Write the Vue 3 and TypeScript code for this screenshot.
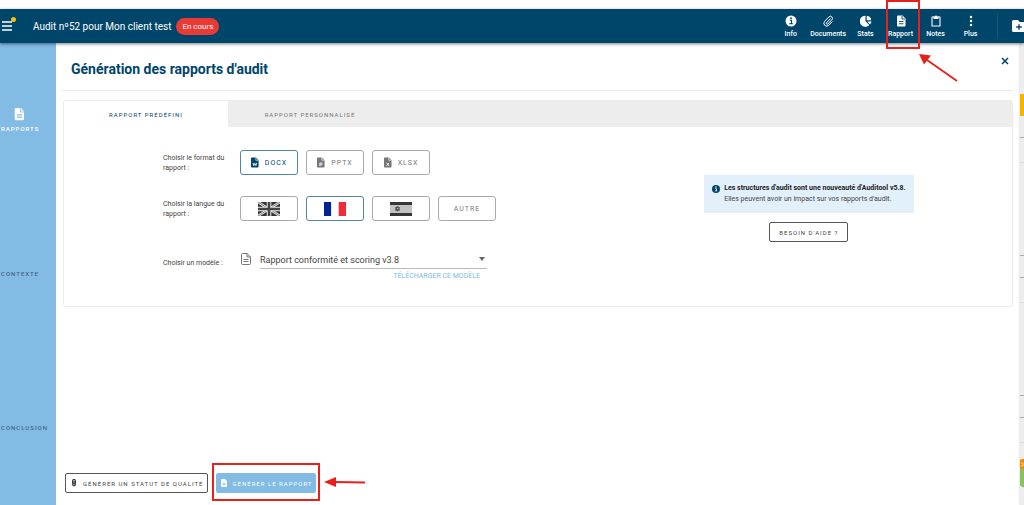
<script setup lang="ts">
import { ref } from 'vue'

type Format = 'DOCX' | 'PPTX' | 'XLSX'
type Lang = 'en' | 'fr' | 'es' | 'other'

const activeTab = ref(0)
const format = ref<Format>('DOCX')
const lang = ref<Lang>('fr')
const template = ref('Rapport conformité et scoring v3.8')

const tabs: string[] = ['Rapport prédéfini', 'Rapport personnalisé']

const formats: { id: Format; glyph: string }[] = [
  { id: 'DOCX', glyph: 'M7 13l1.600 6 2.400-5 2.400 5 1.600-6' },
  { id: 'PPTX', glyph: 'M9 20v-7h3a2 2 0 0 1 0 4.500H9' },
  { id: 'XLSX', glyph: 'M8.500 13l5 6.500M13.500 13l-5 6.500' },
]
</script>

<template>
  <div class="app">
    <header class="topbar">
      <button class="menu" type="button" aria-label="Menu">
        <svg width="11" height="10" viewBox="0 0 11 10"><path d="M0 1h10M0 5h10M0 9h10" stroke="#fff" stroke-width="1.3" /></svg>
        <span class="dot"></span>
      </button>
      <span class="audit-name">Audit nº52 pour Mon client test</span>
      <span class="status">En cours</span>

      <nav class="tools">
        <button type="button" class="tool">
          <svg viewBox="0 0 24 24"><circle cx="12" cy="12" r="11" fill="#fff" /><path d="M9.500 10.500h3.500v6.500M9 17.200h6.500" fill="none" stroke="#00456a" stroke-width="2.200" /><circle cx="12" cy="6.500" r="1.800" fill="#00456a" /></svg>
          <span>Info</span>
        </button>
        <button type="button" class="tool">
          <svg viewBox="0 0 24 24"><path d="M17 7l-8 8.500a1.800 1.800 0 0 0 2.700 2.500l8-8.500a4 4 0 0 0-6-5.700l-8.500 9a5.700 5.700 0 0 0 8.300 7.800l7-7.500" fill="none" stroke="#fff" stroke-width="2" /></svg>
          <span>Documents</span>
        </button>
        <button type="button" class="tool">
          <svg viewBox="0 0 24 24"><path d="M11 1.500v11l7.500 7.500A11 11 0 1 1 11 1.500zM13.500 1.500a10 10 0 0 1 9 9h-9zM14.500 13h8.500a11 11 0 0 1-3 6z" fill="#fff" /></svg>
          <span>Stats</span>
        </button>
        <button type="button" class="tool marked">
          <svg viewBox="0 0 24 24"><path d="M6 1h9l6 6v14a2 2 0 0 1-2 2H6a2 2 0 0 1-2-2V3a2 2 0 0 1 2-2z" fill="#fff" /><path d="M14 2v6h6M8 13h9M8 17.500h9" fill="none" stroke="#00456a" stroke-width="1.800" /></svg>
          <span>Rapport</span>
          <svg class="arrow-up" viewBox="0 0 39 28"><path d="M8 6l30 21" stroke="#e8201c" stroke-width="1.800" /><path d="M0 0l12 1.500-7 9z" fill="#e8201c" /></svg>
        </button>
        <button type="button" class="tool">
          <svg viewBox="0 0 24 24"><path d="M4 4h16v18H4z" fill="none" stroke="#fff" stroke-width="2.200" stroke-linejoin="round" /><path d="M7 3h3a2 2 0 0 1 4 0h3v5H7z" fill="#fff" /></svg>
          <span>Notes</span>
        </button>
        <button type="button" class="tool">
          <svg viewBox="0 0 24 24"><circle cx="12" cy="4" r="2.500" fill="#fff" /><circle cx="12" cy="12" r="2.500" fill="#fff" /><circle cx="12" cy="20" r="2.500" fill="#fff" /></svg>
          <span>Plus</span>
        </button>
      </nav>
      <button type="button" class="folder" aria-label="Nouveau dossier">
        <svg width="15" height="14" viewBox="0 0 15 14"><path d="M1.500 1H6l1.500 2H14v10H1.500A1.500 1.500 0 0 1 0 11.500v-9A1.500 1.500 0 0 1 1.500 1z" fill="#fff" /><path d="M7 5.200v5.600M4.200 8h5.600" stroke="#00456a" stroke-width="1.400" /></svg>
      </button>
    </header>

    <div class="body">
      <aside class="sidebar">
        <a href="#rapports" class="side-item current">
          <svg width="11" height="13" viewBox="0 0 11 13"><path d="M2 0h5l3 3.500V11a1.300 1.300 0 0 1-1.300 1.300H2A1.300 1.300 0 0 1 .7 11V1.300A1.300 1.300 0 0 1 2 0z" fill="#fff" /><path d="M6.500.5V4H10M3 6.500h5M3 8h5M3 9.500h5" fill="none" stroke="#82bbe4" stroke-width=".8" /></svg>
          <span>Rapports</span>
        </a>
        <a href="#contexte" class="side-item">Contexte</a>
        <a href="#conclusion" class="side-item">Conclusion</a>
      </aside>

      <main class="panel">
        <div class="heading">
          <h1>Génération des rapports d'audit</h1>
          <button type="button" class="close" aria-label="Fermer">
            <svg width="8" height="8" viewBox="0 0 8 8"><path d="M1 1l6 6M7 1L1 7" stroke="#00456a" stroke-width="1.500" /></svg>
          </button>
        </div>

        <section class="card">
          <div class="tabs" role="tablist">
            <button
              v-for="(tab, i) in tabs"
              :key="tab"
              type="button"
              role="tab"
              class="tab"
              :class="{ active: activeTab === i }"
              :aria-selected="activeTab === i"
              @click="activeTab = i"
            >{{ tab }}</button>
          </div>

          <div class="content">
            <div class="form">
              <div class="row">
                <span id="format-label" class="label">Choisir le format du rapport :</span>
                <div class="options" role="group" aria-labelledby="format-label">
                  <button
                    v-for="f in formats"
                    :key="f.id"
                    type="button"
                    class="option"
                    :class="{ selected: format === f.id }"
                    :aria-pressed="format === f.id"
                    @click="format = f.id"
                  >
                    <svg class="file" viewBox="0 0 18 24"><path d="M2 1h9l6 6v14a2 2 0 0 1-2 2H2a2 2 0 0 1-2-2V3a2 2 0 0 1 2-2z" fill="currentColor" /><path d="M11 1v6h6" fill="none" stroke="#fff" stroke-width="1.500" /><path :d="f.glyph" transform="translate(-2.500 0)" fill="none" stroke="#fff" stroke-width="2" /></svg>
                    <span>{{ f.id }}</span>
                  </button>
                </div>
              </div>

              <div class="row">
                <span id="lang-label" class="label">Choisir la langue du rapport :</span>
                <div class="options" role="group" aria-labelledby="lang-label">
                  <button type="button" class="option" :class="{ selected: lang === 'en' }" aria-label="Anglais" @click="lang = 'en'">
                    <svg width="22" height="14" viewBox="0 0 22 14"><path d="M0 0h22v14H0z" fill="#333" /><path d="M0 0l22 14M22 0L0 14" stroke="#e8e8e8" stroke-width="2.400" /><path d="M0 0l22 14M22 0L0 14" stroke="#666" stroke-width=".8" /><path d="M11 0v14M0 7h22" stroke="#eee" stroke-width="4.600" /><path d="M11 0v14M0 7h22" stroke="#444" stroke-width="2.600" /></svg>
                  </button>
                  <button type="button" class="option" :class="{ selected: lang === 'fr' }" aria-label="Français" @click="lang = 'fr'">
                    <svg width="22" height="14" viewBox="0 0 22 14"><path d="M0 0h7.300v14H0z" fill="#002395" /><path d="M7.300 0h7.400v14H7.300z" fill="#fff" /><path d="M14.700 0H22v14h-7.300z" fill="#ef2b3a" /></svg>
                  </button>
                  <button type="button" class="option" :class="{ selected: lang === 'es' }" aria-label="Espagnol" @click="lang = 'es'">
                    <svg width="22" height="14" viewBox="0 0 22 14"><path d="M0 0h22v14H0z" fill="#363636" /><path d="M0 3h22v8H0z" fill="#c2c2c2" /><path d="M5 5h1v4H5zM9 5h1v4H9z" fill="#777" /><path d="M6 5l1.500-1L9 5v3.500L7.500 9.500 6 8.500z" fill="#555" /><path d="M7 6h1.500v1H7z" fill="#aaa" /></svg>
                  </button>
                  <button type="button" class="option" :class="{ selected: lang === 'other' }" @click="lang = 'other'">Autre</button>
                </div>
              </div>

              <div class="row model">
                <label for="model" class="label">Choisir un modèle :</label>
                <svg class="doc" width="10" height="12" viewBox="0 0 10 12"><path d="M1.500.5h4.700L9.500 4v6.500a1 1 0 0 1-1 1h-7a1 1 0 0 1-1-1v-9a1 1 0 0 1 1-1zM6 .5V4h3.500M2.500 6.500h5M2.500 8.500h5" fill="none" stroke="#777" stroke-width="1" /></svg>
                <div class="field">
                  <div class="select-wrap">
                    <select id="model" v-model="template">
                      <option>Rapport conformité et scoring v3.8</option>
                    </select>
                    <svg class="caret" width="6" height="4" viewBox="0 0 6 4"><path d="M0 0h6L3 4z" fill="#666" /></svg>
                  </div>
                  <a href="#telecharger" class="download">Télécharger ce modèle</a>
                </div>
              </div>
            </div>

            <div class="help">
              <div class="notice">
                <svg width="8" height="8" viewBox="0 0 24 24"><circle cx="12" cy="12" r="12" fill="#00456a" /><path d="M9.500 10.500H13V17M9 17.500h6.500" fill="none" stroke="#fff" stroke-width="2.400" /><circle cx="12" cy="6" r="2" fill="#fff" /></svg>
                <p><strong>Les structures d'audit sont une nouveauté d'Auditool v5.8.</strong><br />Elles peuvent avoir un impact sur vos rapports d'audit.</p>
              </div>
              <button type="button" class="help-button">Besoin d'aide ?</button>
            </div>
          </div>
        </section>

        <footer class="actions">
          <button type="button" class="action">
            <svg width="6" height="8" viewBox="0 0 6 8"><path d="M1.500 1.500a1.500 1.200 0 0 1 3 0v3a1.700 1.700 0 1 1-3 0z" fill="#999" stroke="#222" stroke-width=".9" /><path d="M3 2.500v3" stroke="#222" /></svg>
            <span>Générer un statut de qualité</span>
          </button>
          <div class="highlight">
            <button type="button" class="action primary">
              <svg width="6" height="8" viewBox="0 0 6 8"><path d="M.7 0H4l2 2.300v5a.7.7 0 0 1-.7.7H.7A.7.7 0 0 1 0 7.300V.7A.7.7 0 0 1 .7 0z" fill="#fff" /><path d="M1.500 4.300h3M1.500 5.800h3" stroke="#82bbe4" stroke-width=".8" /></svg>
              <span>Générer le rapport</span>
            </button>
            <svg class="arrow-left" width="42" height="12" viewBox="0 0 42 12"><path d="M10 6l31 .5" stroke="#e8201c" stroke-width="1.800" /><path d="M0 6L12 1v10z" fill="#e8201c" /></svg>
          </div>
        </footer>
      </main>

      <div class="behind" aria-hidden="true">
        <i class="gap-a"></i><i class="yellow"></i><i class="cell"></i><i class="cell soft"></i><i class="gap-b"></i><i class="cell"></i><i class="cell soft"></i><i class="gap-b"></i><i class="cell"></i><i class="cell soft"></i>
        <svg width="4" height="48" viewBox="0 0 4 48"><circle cx="8" cy="31" r="14" fill="#8bc163" /><circle cx="3" cy="21" r="5" fill="#f28b00" /><path d="M1 20h2v3H1" fill="none" stroke="#ffd49a" /></svg>
      </div>
    </div>
  </div>
</template>

<style>
body {
  margin: 0;
  background: #fff;
}
</style>

<style scoped>
.app {
  display: flex;
  flex-direction: column;
  min-height: 100vh;
  overflow: hidden;
  box-sizing: border-box;
  padding-top: 9px;
  font-family: Roboto, "Liberation Sans", sans-serif;
  color: #444;
}
button,
select {
  font-family: inherit;
  border: 0;
  padding: 0;
  margin: 0;
  background: none;
  color: inherit;
  cursor: pointer;
}
svg {
  display: block;
  flex: none;
}
a {
  text-decoration: none;
}

.topbar {
  display: flex;
  align-items: center;
  height: 34px;
  background: #00456a;
  color: #fff;
  box-shadow: 0 1px 3px rgba(0, 0, 0, 0.5);
  z-index: 1;
}
.menu {
  position: relative;
  width: 33px;
  padding-left: 2px;
}
.dot {
  position: absolute;
  top: -4px;
  left: 11px;
  width: 5px;
  height: 5px;
  border-radius: 50%;
  background: #fbbf0c;
}
.audit-name {
  font-size: 10px;
  font-weight: 400;
}
.status {
  margin-left: 5px;
  padding: 0 6px;
  border-radius: 9px;
  background: #e93a36;
  font-size: 8px;
  line-height: 17px;
}
.tools {
  display: flex;
  margin-left: auto;
  height: 100%;
}
.tool {
  position: relative;
  display: flex;
  flex-direction: column;
  align-items: center;
  justify-content: center;
  gap: 3px;
  min-width: 35px;
  padding: 0 2px;
  font-size: 7px;
  line-height: 8px;
  font-weight: 500;
}
.tool svg {
  width: 12px;
  height: 12px;
}
.marked::after {
  content: "";
  position: absolute;
  inset: -9px -2px -6px 3px;
  border: 2px solid #e8201c;
}
.tool .arrow-up {
  position: absolute;
  top: 45px;
  left: 36px;
  width: 39px;
  height: 28px;
}
.folder {
  width: 27px;
  margin-left: 9px;
  height: 26px;
  padding-left: 14px;
  border-left: 1px solid #16557a;
  overflow: hidden;
}

.body {
  display: flex;
  flex: 1;
}
.sidebar {
  display: grid;
  grid-template-rows: repeat(3, 1fr);
  align-items: center;
  box-sizing: border-box;
  width: 56px;
  padding: 1px 0 0 1px;
  flex: none;
  background: #82bbe4;
}
.side-item {
  display: flex;
  flex-direction: column;
  gap: 4px;
  color: #426a86;
  font-size: 6px;
  line-height: 8px;
  font-weight: 500;
  letter-spacing: 1px;
  text-transform: uppercase;
}
.side-item svg {
  margin-left: 13px;
}
.current {
  color: #fff;
}

.panel {
  display: flex;
  flex-direction: column;
  flex: 1;
  min-width: 0;
  padding: 0 7px 12px;
}
.heading {
  display: flex;
  justify-content: space-between;
  height: 47px;
  margin-left: -1px;
  padding: 0 4px 0 9px;
  border-bottom: 1px solid #e9e9e9;
}
h1 {
  margin: 0;
  color: #00456a;
  font-size: 14px;
  line-height: 52px;
  font-weight: 700;
}
.close {
  align-self: flex-start;
  margin-top: 14px;
}
.card {
  margin-top: 9px;
  border: 1px solid #ececec;
  border-radius: 3px;
}
.tabs {
  display: flex;
  background: #ededed;
}
.tab {
  min-width: 164px;
  height: 26px;
  color: #777;
  font-size: 6px;
  letter-spacing: 1px;
  text-transform: uppercase;
}
.tab.active {
  background: #fff;
  color: #00456a;
}
.content {
  display: grid;
  grid-template-columns: 4fr 3fr;
  padding: 23px 0 25px;
}
.form {
  display: flex;
  flex-direction: column;
  gap: 21px;
  padding-left: 99px;
}
.row {
  display: flex;
  align-items: center;
}
.label {
  width: 65px;
  margin-right: 12px;
  flex: none;
  font-size: 7px;
  line-height: 10px;
}
.options {
  display: flex;
  gap: 8px;
}
.option {
  display: flex;
  align-items: center;
  justify-content: center;
  gap: 6px;
  box-sizing: border-box;
  width: 58px;
  height: 25px;
  border: 1px solid #aaa;
  border-radius: 3px;
  color: #777;
  font-size: 7px;
  letter-spacing: 1px;
  text-transform: uppercase;
}
.option.selected {
  border-color: #4f86a5;
  color: #00456a;
}
.file {
  width: 8px;
  height: 11px;
}
.model {
  align-items: flex-start;
  padding-top: 11px;
}
.model .label {
  padding-top: 5px;
}
.doc {
  margin: 0 9px 0 1px;
}
.field {
  width: 227px;
}
.select-wrap {
  position: relative;
  padding-bottom: 2px;
  border-bottom: 1px solid #bbb;
}
select {
  display: block;
  appearance: none;
  width: 100%;
  height: 13px;
  font-size: 9px;
}
.caret {
  position: absolute;
  right: 2px;
  top: 4px;
  pointer-events: none;
}
.download {
  display: block;
  padding: 3px 7px 0 0;
  color: #82bbe4;
  font-size: 7px;
  line-height: 9px;
  text-align: right;
  text-transform: uppercase;
}
.help {
  display: flex;
  flex-direction: column;
  align-items: center;
  gap: 9px;
  padding-top: 25px;
}
.notice {
  display: flex;
  gap: 4px;
  padding: 8px;
  background: #e2f0fc;
  font-size: 7px;
  line-height: 11px;
}
.notice svg {
  margin-top: 2px;
}
.notice p {
  margin: 0;
  white-space: nowrap;
}
.notice strong {
  color: #222;
  font-weight: 700;
}
.help-button {
  height: 20px;
  padding: 0 9px;
  border: 1px solid #555;
  border-radius: 2px;
  font-size: 6px;
  letter-spacing: 1px;
  text-transform: uppercase;
}

.actions {
  display: flex;
  align-items: center;
  gap: 8px;
  margin-top: auto;
  padding-left: 2px;
}
.action {
  display: flex;
  align-items: center;
  gap: 6px;
  height: 20px;
  padding: 0 4px 0 5px;
  border: 1px solid #555;
  border-radius: 2px;
  font-size: 6px;
  letter-spacing: 1px;
  text-transform: uppercase;
  white-space: nowrap;
}
.primary {
  gap: 5px;
  padding: 0 3px 0 4px;
  border-color: #82bbe4;
  background: #82bbe4;
  color: #fff;
}
.highlight {
  position: relative;
}
.highlight::after {
  content: "";
  position: absolute;
  inset: -10px -4px -8px;
  border: 2px solid #e8201c;
  pointer-events: none;
}
.arrow-left {
  position: absolute;
  left: calc(100% + 8px);
  top: 3px;
}

.behind {
  width: 4px;
  flex: none;
  background: #ededed;
  box-shadow: 0 0 2px rgba(0, 0, 0, 0.3);
}
.behind i {
  display: block;
}
.gap-a {
  height: 51px;
}
.yellow {
  height: 22px;
  background: #f5b400;
}
.cell {
  height: 21px;
  border-bottom: 1px solid #aaa;
}
.soft {
  height: 24px;
  border-color: #ddd;
}
.gap-b {
  height: 92px;
  border-bottom: 1px solid #aaa;
}
</style>
